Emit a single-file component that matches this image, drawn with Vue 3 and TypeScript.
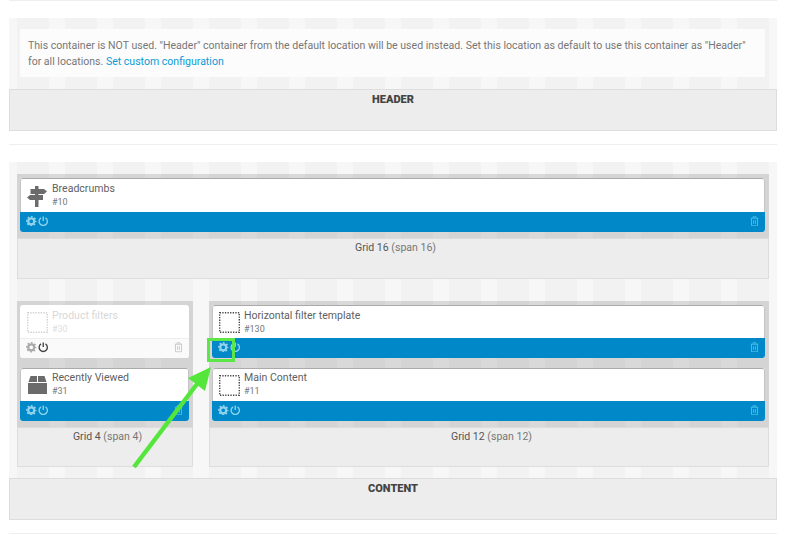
<script setup lang="ts">
interface Widget { id: number; name: string; icon: 'sign' | 'box' | 'dots'; off?: boolean }
const top: Widget = { id: 10, name: 'Breadcrumbs', icon: 'sign' }
const cols: { cls: string; title: string; span: string; items: Widget[] }[] = [
  { cls: 'full', title: 'Grid 16', span: 'span 16', items: [top] },
  {
    cls: 'narrow', title: 'Grid 4', span: 'span 4', items: [
      { id: 30, name: 'Product filters', icon: 'dots', off: true },
      { id: 31, name: 'Recently Viewed', icon: 'box' },
    ],
  },
  {
    cls: 'wide', title: 'Grid 12', span: 'span 12', items: [
      { id: 130, name: 'Horizontal filter template', icon: 'dots' },
      { id: 11, name: 'Main Content', icon: 'dots' },
    ],
  },
]
</script>

<template>
  <div class="page">
    <hr class="rule first" />
    <section class="zone head">
      <p class="notice">
        This container is NOT used. "Header" container from the default location will be used instead. Set this location as default to use this container as "Header" for all locations.
        <a class="link">Set custom configuration</a>
      </p>
    </section>
    <div class="label-box"><strong>HEADER</strong></div>
    <hr class="rule mid" />

    <section class="zone body">
      <div class="row">
        <div v-for="c in cols" :key="c.title" class="col" :class="c.cls">
          <div class="stack">
            <article v-for="w in c.items" :key="w.id" class="card" :class="{ off: w.off }">
              <div class="main">
                <svg class="ico" viewBox="0 0 21 21">
                  <path v-if="w.icon === 'sign'" fill="#6b6b6b" d="M8 0h3.500v3H17l3 2.500L17 8h-5.500v1H16v5h-4.500v7H8v-7H3L0 11.500 3 9h5V8H3.500V3H8z" />
                  <path v-else-if="w.icon === 'box'" fill="#6b6b6b" d="M3.500 1H10v6H1.500zM11 1h6.500l2 6H11zM1 8h19v11H1z" />
                  <rect v-else x=".7" y=".7" width="19.600" height="19.600" fill="none" stroke="#444" stroke-width="1.400" stroke-dasharray="1.300 1.300" />
                </svg>
                <div class="txt"><div class="name">{{ w.name }}</div><div class="num">#{{ w.id }}</div></div>
              </div>
              <div class="bar">
                <svg class="gear" viewBox="0 0 14 14">
                  <circle class="g1" cx="7" cy="7" r="4" fill="none" stroke-width="3" />
                  <circle class="g1" cx="7" cy="7" r="6" fill="none" stroke-width="2" stroke-dasharray="2.360 2.350" stroke-dashoffset="1.180" />
                </svg>
                <svg class="pow" viewBox="0 0 14 14"><path class="p" d="M4 2.500a5.500 5.500 0 1 0 6 0M7 .5v6" fill="none" stroke-width="1.800" /></svg>
                <svg class="trash" viewBox="0 0 12 14"><path class="t" d="M1 3h10M4 3V1h4v2M2 3v10h8V3M4.800 5.500v5M7.200 5.500v5" fill="none" stroke-width="1.300" /></svg>
              </div>
            </article>
          </div>
          <div class="grid-label">{{ c.title }} <span>({{ c.span }})</span></div>
        </div>
      </div>
    </section>
    <div class="label-box content"><strong>CONTENT</strong></div>
    <hr class="rule end" />

    <svg class="arrow" width="790" height="535" viewBox="0 0 790 535">
      <rect x="208.500" y="339.500" width="25" height="21" fill="none" stroke="#5de647" stroke-width="3" />
      <path d="M134 467L197 384" stroke="#55e63c" stroke-width="4.500" fill="none" />
      <path d="M211 367L188 378L205 391z" fill="#55e63c" />
    </svg>
  </div>
</template>

<style>
html, body { margin: 0; background: #fff; }
</style>

<style scoped>
.page { position: relative; width: 790px; height: 535px; padding: 0 13px 0 9px; box-sizing: border-box; overflow: hidden; font-family: Roboto, "Liberation Sans", sans-serif; font-size: 10.550px; color: #555; }
.rule { border: 0; height: 1px; background: #eee; margin: 0; }
.first { margin-bottom: 17px; }
.mid { margin: 13px 0 17px; }
.end { margin-top: 13px; }
.zone { background: #f7f7f7 linear-gradient(90deg, #f2f2f2 0 32px, #f7f7f7 32px 48px) 8px 0 / 48px 100%; }
.head { padding: 11px 12px 12px 11px; }
.notice { margin: 0; padding: 9px 8px 8px; background: #fcfcfc; line-height: 16px; color: #777; height: 31px; }
.link { color: #0a9bd6; }
.label-box { height: 42px; box-sizing: border-box; border: 1px solid #ddd; background: #ededed; text-align: center; font-weight: 700; font-size: 11px; color: #444; padding-top: 3px; line-height: 14px; }
.body { height: 316px; padding: 12px 8px 0; box-sizing: border-box; }
.row { display: grid; grid-template-columns: 176px 560px; column-gap: 16px; row-gap: 22px; }
.col { background: rgba(0,0,0,.12); display: flex; flex-direction: column; }
.full { grid-column: 1 / -1; height: 105px; }
.narrow, .wide { height: 166px; }
.stack { padding: 4px 4px 6px 3px; display: flex; flex-direction: column; gap: 10px; }
.card { height: 53px; box-sizing: border-box; display: flex; flex-direction: column; border-radius: 3px; overflow: hidden; background: #fff; }
.full .card { height: 54px; }
.main { flex: 1; display: flex; align-items: flex-start; padding: 7px 8px 0 7px; gap: 4px; min-height: 0; border: 1px solid #c4c4c4; border-top-color: #aaa; border-bottom: 0; border-radius: 3px 3px 0 0; box-sizing: border-box; }
.ico { width: 21px; height: 21px; flex: none; margin: -1px 0 0 -1px; }
.full .ico { margin-top: 0; }
.txt { line-height: 13px; margin: -5px 0 0 0; }
.full .txt, .card:first-child .txt { margin-top: -4px; }
.name { color: #5f5f5f; }
.num { color: #777; font-size: 9px; margin-top: 1px; }
.bar { height: 20px; flex: none; background: #0088c9; display: flex; align-items: center; padding: 0 6px 2px; box-sizing: border-box; gap: 1.500px; }
.gear { width: 10.500px; height: 10.500px; }
.pow { width: 10.500px; height: 10.500px; }
.trash { width: 9px; height: 10.500px; margin-left: auto; }
.g1 { stroke: #8fd3ee; }
.p { stroke: #8fd3ee; }
.t { stroke: #45bde6; }
.off .main { opacity: .25; border-color: transparent; }
.off .bar { background: #fafafa; border-top: 1px solid #eee; }
.off .g1 { stroke: #aaa; }
.off .p { stroke: #444; }
.off .t { stroke: #ccc; }
.grid-label { flex: 1; box-sizing: border-box; border: 1px solid #ddd; background: #ededed; text-align: center; padding: 2px 0 0 5px; line-height: 14px; color: #555; }
.grid-label span { color: #777; }
.arrow { position: absolute; left: 0; top: 0; pointer-events: none; }
</style>
